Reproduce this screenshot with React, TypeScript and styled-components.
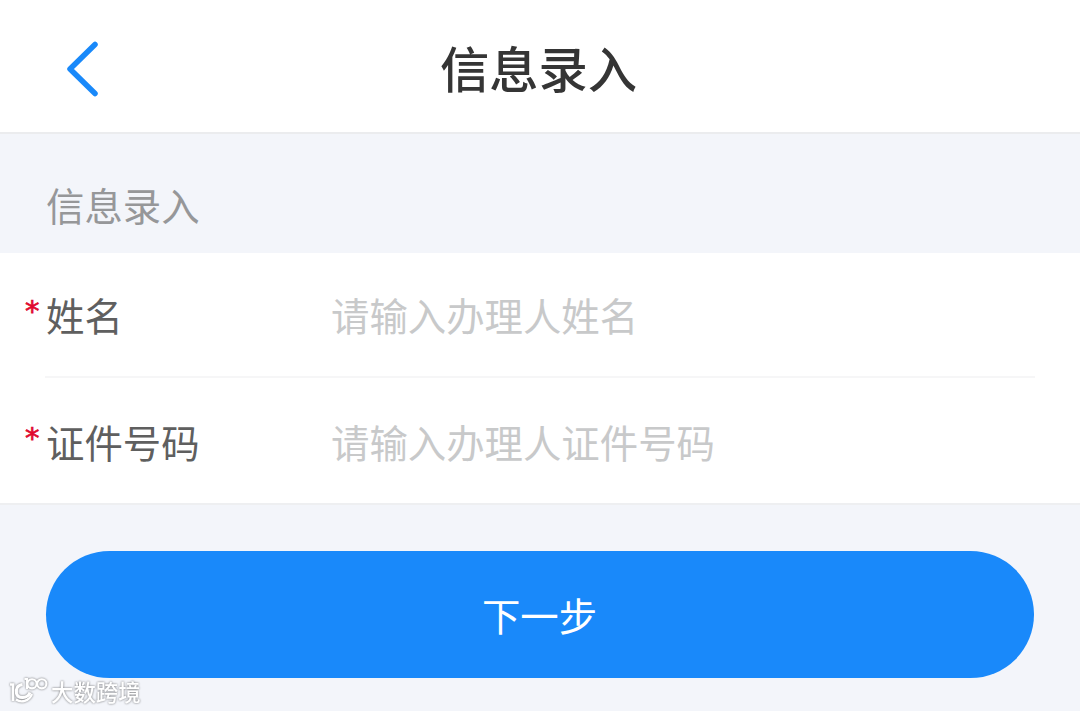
import React, { useState } from 'react'
import styled, { createGlobalStyle } from 'styled-components'

const Colors = {
  blue: '#1989fa',
  page: '#f3f5fa',
  title: '#353535',
  label: '#5f5f5f',
  muted: '#969799',
  placeholder: '#c8c9ca',
  red: '#e0082d'
}

const GlobalStyle = createGlobalStyle`
  * {
    box-sizing: border-box;
  }

  body {
    margin: 0;
    background: ${Colors.page};
    font-family: 'Noto Sans CJK SC', 'Noto Sans', sans-serif;
  }
`

const Page = styled.div`
  height: 711px;
  overflow: hidden;
  position: relative;
`

const NavBar = styled.header`
  display: grid;
  grid-template-columns: 164px 1fr 164px;
  align-items: center;
  height: 134px;
  padding-bottom: 1px;
  background: #fff;
  border-bottom: 2px solid #ebecee;
`

const BackButton = styled.button`
  display: flex;
  padding: 6px 0 0 64px;
  border: 0;
  background: none;
  cursor: pointer;
`

const Title = styled.h1`
  margin: 0 3px 0 0;
  padding-top: 2px;
  color: ${Colors.title};
  font-size: 49.3px;
  font-weight: 500;
  line-height: 70px;
  text-align: center;
`

const SectionTitle = styled.h2`
  height: 119px;
  margin: 0;
  padding: 42px 46px 0;
  color: ${Colors.muted};
  font-size: 38.4px;
  font-weight: 400;
  line-height: 56px;
`

const Group = styled.div`
  background: #fff;
  border-bottom: 2px solid #eeeff1;
`

const Cell = styled.label<{ $divided?: boolean }>`
  display: flex;
  align-items: center;
  height: 125px;
  margin: 0 45px;
  padding-bottom: ${({ $divided }) => ($divided ? '2px' : '0')};
  border-bottom: ${({ $divided }) => ($divided ? '2px solid #f6f6f7' : '0')};
  font-size: 38.4px;
`

const Label = styled.span`
  position: relative;
  flex: 0 0 286px;
  color: ${Colors.label};
  padding-left: 1px;

  &::before {
    content: '*';
    position: absolute;
    left: -20px;
    top: 8px;
    color: ${Colors.red};
    font-family: 'DejaVu Sans', sans-serif;
    font-size: 29px;
    line-height: 34px;
    -webkit-text-stroke: 0.7px ${Colors.red};
  }
`

const Input = styled.input`
  flex: 1;
  min-width: 0;
  padding: 0;
  border: 0;
  outline: none;
  background: none;
  color: ${Colors.title};
  font: inherit;

  &::placeholder {
    color: ${Colors.placeholder};
  }
`

const NextButton = styled.button`
  display: block;
  width: 988px;
  height: 127px;
  margin: 46px auto 0;
  padding: 0 1px 1px 0;
  border: 0;
  border-radius: 64px;
  background: ${Colors.blue};
  color: #fff;
  font: inherit;
  font-size: 38.4px;
  cursor: pointer;
`

const Watermark = styled.div`
  position: absolute;
  left: 8px;
  bottom: 4px;
  display: flex;
  align-items: center;
  gap: 3px;
  color: #fff;
  filter: drop-shadow(0 0 1px rgba(0, 0, 0, 0.35)) drop-shadow(0 0 1px rgba(0, 0, 0, 0.2));
`

const WatermarkText = styled.span`
  padding-bottom: 2px;
  font-size: 22.4px;
  font-weight: 500;
  line-height: 28px;
`

interface FieldProps {
  label: string
  placeholder: string
  divided?: boolean
}

function Field({ label, placeholder, divided }: FieldProps) {
  const [value, setValue] = useState('')

  return (
    <Cell $divided={divided}>
      <Label>{label}</Label>
      <Input value={value} placeholder={placeholder} onChange={(e) => setValue(e.target.value)} />
    </Cell>
  )
}

function WatermarkLogo() {
  return (
    <svg width="40" height="30" viewBox="0 0 40 30" fill="none" stroke="#fff">
      <path d="M2 7.5 H5 V24" strokeWidth="2.6" />
      <path d="M14.5 7.5 C9.5 8 7.5 12 8.5 16.5 C10 22 19.5 22 22 15.5" strokeWidth="3" />
      <path d="M8 22.5 C13 26 21 24.5 24 17" strokeWidth="2.2" />
      <path d="M16.5 2 H19 V12" strokeWidth="2" />
      <circle cx="24" cy="6.8" r="4.6" strokeWidth="2.1" />
      <circle cx="33.8" cy="6.8" r="4.6" strokeWidth="2.1" />
    </svg>
  )
}

export default function App() {
  return (
    <Page>
      <GlobalStyle />
      <NavBar>
        <BackButton type="button" aria-label="返回">
          <svg width="36" height="56" viewBox="0 0 36 56" fill="none">
            <path d="M31 3.5 L6 28 L31 52.5" stroke={Colors.blue} strokeWidth="5.5" strokeLinecap="round" strokeLinejoin="round" />
          </svg>
        </BackButton>
        <Title>信息录入</Title>
      </NavBar>
      <SectionTitle>信息录入</SectionTitle>
      <Group>
        <Field label="姓名" placeholder="请输入办理人姓名" divided />
        <Field label="证件号码" placeholder="请输入办理人证件号码" />
      </Group>
      <NextButton type="button">下一步</NextButton>
      <Watermark>
        <WatermarkLogo />
        <WatermarkText>大数跨境</WatermarkText>
      </Watermark>
    </Page>
  )
}
